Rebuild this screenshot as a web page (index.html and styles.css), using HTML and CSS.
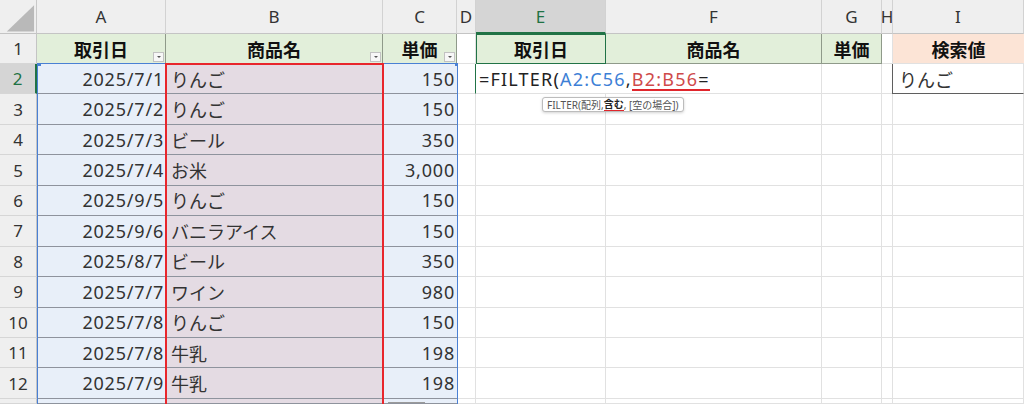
FILE: index.html
```html
<!DOCTYPE html>
<html lang="ja">
<head>
<meta charset="utf-8">
<title>FILTER</title>
<link rel="stylesheet" href="styles.css">
</head>
<body>
<div class="sheet">
  <!-- column headers -->
  <div class="corner"><svg width="37" height="34" viewBox="0 0 37 34"><polygon points="7,32 35,32 35,5" fill="#b9b9b9"/></svg></div>
  <div class="ch">A</div>
  <div class="ch">B</div>
  <div class="ch">C</div>
  <div class="ch">D</div>
  <div class="ch sel">E</div>
  <div class="ch">F</div>
  <div class="ch">G</div>
  <div class="ch">H</div>
  <div class="ch">I</div>

  <!-- row 1 -->
  <div class="rh">1</div>
  <div class="hd">取引日<span class="fbtn"></span></div>
  <div class="hd">商品名<span class="fbtn"></span></div>
  <div class="hd">単価<span class="fbtn"></span></div>
  <div class="c"></div>
  <div class="hd hd-act">取引日</div>
  <div class="hd">商品名</div>
  <div class="hd">単価</div>
  <div class="c"></div>
  <div class="hs">検索値</div>

  <!-- row 2 -->
  <div class="rh sel">2</div>
  <div class="dt r">2025/7/1</div>
  <div class="dt b">りんご</div>
  <div class="dt r">150</div>
  <div class="c"></div>
  <div class="c edit">
    <span class="formula">=FILTER(<span class="ref-a">A2:C56</span>,<span class="ul"><span class="ref-b">B2:B56</span>=</span></span>
    <span class="tip">FILTER(配列, <b>含む</b>, [空の場合])</span>
  </div>
  <div class="c"></div>
  <div class="c"></div>
  <div class="c"></div>
  <div class="c inp">りんご</div>

  <!-- row 3 -->
  <div class="rh">3</div>
  <div class="dt r">2025/7/2</div>
  <div class="dt b">りんご</div>
  <div class="dt r">150</div>
  <div class="c"></div><div class="c"></div><div class="c"></div><div class="c"></div><div class="c"></div><div class="c"></div>

  <!-- row 4 -->
  <div class="rh">4</div>
  <div class="dt r">2025/7/3</div>
  <div class="dt b">ビール</div>
  <div class="dt r">350</div>
  <div class="c"></div><div class="c"></div><div class="c"></div><div class="c"></div><div class="c"></div><div class="c"></div>

  <!-- row 5 -->
  <div class="rh">5</div>
  <div class="dt r">2025/7/4</div>
  <div class="dt b">お米</div>
  <div class="dt r">3,000</div>
  <div class="c"></div><div class="c"></div><div class="c"></div><div class="c"></div><div class="c"></div><div class="c"></div>

  <!-- row 6 -->
  <div class="rh">6</div>
  <div class="dt r">2025/9/5</div>
  <div class="dt b">りんご</div>
  <div class="dt r">150</div>
  <div class="c"></div><div class="c"></div><div class="c"></div><div class="c"></div><div class="c"></div><div class="c"></div>

  <!-- row 7 -->
  <div class="rh">7</div>
  <div class="dt r">2025/9/6</div>
  <div class="dt b">バニラアイス</div>
  <div class="dt r">150</div>
  <div class="c"></div><div class="c"></div><div class="c"></div><div class="c"></div><div class="c"></div><div class="c"></div>

  <!-- row 8 -->
  <div class="rh">8</div>
  <div class="dt r">2025/8/7</div>
  <div class="dt b">ビール</div>
  <div class="dt r">350</div>
  <div class="c"></div><div class="c"></div><div class="c"></div><div class="c"></div><div class="c"></div><div class="c"></div>

  <!-- row 9 -->
  <div class="rh">9</div>
  <div class="dt r">2025/7/7</div>
  <div class="dt b">ワイン</div>
  <div class="dt r">980</div>
  <div class="c"></div><div class="c"></div><div class="c"></div><div class="c"></div><div class="c"></div><div class="c"></div>

  <!-- row 10 -->
  <div class="rh">10</div>
  <div class="dt r">2025/7/8</div>
  <div class="dt b">りんご</div>
  <div class="dt r">150</div>
  <div class="c"></div><div class="c"></div><div class="c"></div><div class="c"></div><div class="c"></div><div class="c"></div>

  <!-- row 11 -->
  <div class="rh">11</div>
  <div class="dt r">2025/7/8</div>
  <div class="dt b">牛乳</div>
  <div class="dt r">198</div>
  <div class="c"></div><div class="c"></div><div class="c"></div><div class="c"></div><div class="c"></div><div class="c"></div>

  <!-- row 12 -->
  <div class="rh">12</div>
  <div class="dt r">2025/7/9</div>
  <div class="dt b">牛乳</div>
  <div class="dt r">198</div>
  <div class="c"></div><div class="c"></div><div class="c"></div><div class="c"></div><div class="c"></div><div class="c"></div>

  <!-- row 13 (only its top edge is in view) -->
  <div class="rh"></div>
  <div class="dt r"></div>
  <div class="dt b"></div>
  <div class="dt r"><span class="qa"></span></div>
  <div class="c"></div><div class="c"></div><div class="c"></div><div class="c"></div><div class="c"></div><div class="c"></div>

  <!-- range highlights (overlay) -->
  <div class="range-blue"><span class="h tl"></span><span class="h tr"></span></div>
  <div class="range-red"></div>
</div>
</body>
</html>
```

FILE: styles.css
```css
html, body {
  margin: 0;
  padding: 0;
  background: #ffffff;
  overflow: hidden;
}

.sheet {
  position: relative;
  display: grid;
  grid-template-columns: 37px 129px 217px 74px 19px 130px 216px 60px 11px 1fr;
  grid-template-rows: 34px 30px repeat(11, 30.45px) 5px;
  width: 1024px;
  height: 404px;
  overflow: hidden;
  font-family: "Noto Sans", "Noto Sans CJK JP", sans-serif;
  font-size: 18px;
  color: #222;
}

.sheet > div {
  box-sizing: border-box;
  display: flex;
  align-items: center;
  white-space: nowrap;
  overflow: hidden;
}

.corner {
  background: #efefef;
  border-right: 1px solid #c8c8c8;
  border-bottom: 1px solid #c4c4c4;
}

.ch {
  justify-content: center;
  background: #efefef;
  border-right: 1px solid #d2d2d2;
  border-bottom: 1px solid #c4c4c4;
  font-size: 17px;
  color: #333;
}

.ch.sel {
  background: #d5d5d5;
  color: #1f7244;
  border-bottom: 2px solid #217346;
}

.rh {
  justify-content: center;
  background: #efefef;
  border-right: 1px solid #c4c4c4;
  border-bottom: 1px solid #d6d6d6;
  font-size: 17px;
  color: #333;
}

.rh.sel {
  background: #d5d5d5;
  color: #1f7244;
  border-right: 2px solid #217346;
}

.c {
  border-right: 1px solid #e1e1e1;
  border-bottom: 1px solid #e1e1e1;
}

.hd {
  position: relative;
  justify-content: center;
  background: #e2efda;
  border-right: 1px solid #8f9a8a;
  border-bottom: 1px solid #8f9a8a;
  font-weight: bold;
  color: #111;
}

.hd-act {
  border: 1px solid #217346;
}

.hs {
  justify-content: center;
  background: #fce4d6;
  border-bottom: 1px solid #e1e1e1;
  font-weight: bold;
  color: #111;
}

.fbtn {
  position: absolute;
  right: 1px;
  bottom: 1px;
  width: 11px;
  height: 10px;
  box-sizing: border-box;
  background: #f7f7f7;
  border: 1px solid #c2c2c2;
}

.fbtn::after {
  content: "";
  position: absolute;
  left: 3px;
  top: 3px;
  border-left: 2px solid transparent;
  border-right: 2px solid transparent;
  border-top: 2px solid #555;
}

.dt {
  position: relative;
  background: #e8eff9;
  border-bottom: 1px solid #8e939d;
  color: #333;
}

.dt.b {
  background: #e4dbe3;
  padding-left: 5px;
}

.dt.r {
  justify-content: flex-end;
  padding-right: 2px;
  letter-spacing: 0.8px;
}

.qa {
  position: absolute;
  left: 5px;
  top: 3px;
  width: 37px;
  height: 6px;
  box-sizing: border-box;
  border: 1px solid #9a9a9a;
  background: #e6e6e6;
}

.edit {
  position: relative;
  overflow: visible !important;
  z-index: 3;
  border-left: 1px solid #217346;
  margin-left: -1px;
}

.formula {
  position: absolute;
  left: 3px;
  top: 0;
  height: 29px;
  display: flex;
  align-items: center;
  padding-right: 6px;
  background: #ffffff;
  color: #222;
  letter-spacing: 1.2px;
}

.ref-a { color: #3d7fd6; }
.ref-b { color: #cf4a4a; }

.ul {
  border-bottom: 2px solid #e0262c;
  line-height: 20px;
  margin-top: 3px;
}

.tip {
  position: absolute;
  left: 66px;
  top: 33px;
  height: 15px;
  box-sizing: border-box;
  padding: 0 4px;
  display: flex;
  align-items: center;
  background: #ffffff;
  border: 1px solid #bcbcbc;
  border-radius: 3px;
  box-shadow: 0 1px 3px rgba(0,0,0,0.18);
  font-size: 10px;
  color: #555;
  letter-spacing: 0;
}

.tip b {
  color: #222;
  border-bottom: 1.5px solid #e0262c;
  line-height: 11px;
}

.inp {
  padding-left: 6px;
  border-left: 1px solid #5f5f5f;
  border-bottom: 1px solid #5f5f5f !important;
  margin-left: -1px;
  color: #333;
}

.range-blue {
  position: absolute;
  left: 37px;
  top: 63px;
  width: 421px;
  height: 345px;
  box-sizing: border-box;
  border: 1px solid #4a80d4;
  pointer-events: none;
}

.range-blue .h {
  position: absolute;
  width: 4px;
  height: 4px;
  background: #4a80d4;
}

.range-blue .tl { left: -1px; top: -2px; }
.range-blue .tr { right: -2px; top: -2px; }

.range-red {
  position: absolute;
  left: 165px;
  top: 63px;
  width: 219px;
  height: 345px;
  box-sizing: border-box;
  border: 2px solid #e8262c;
  pointer-events: none;
}
```
